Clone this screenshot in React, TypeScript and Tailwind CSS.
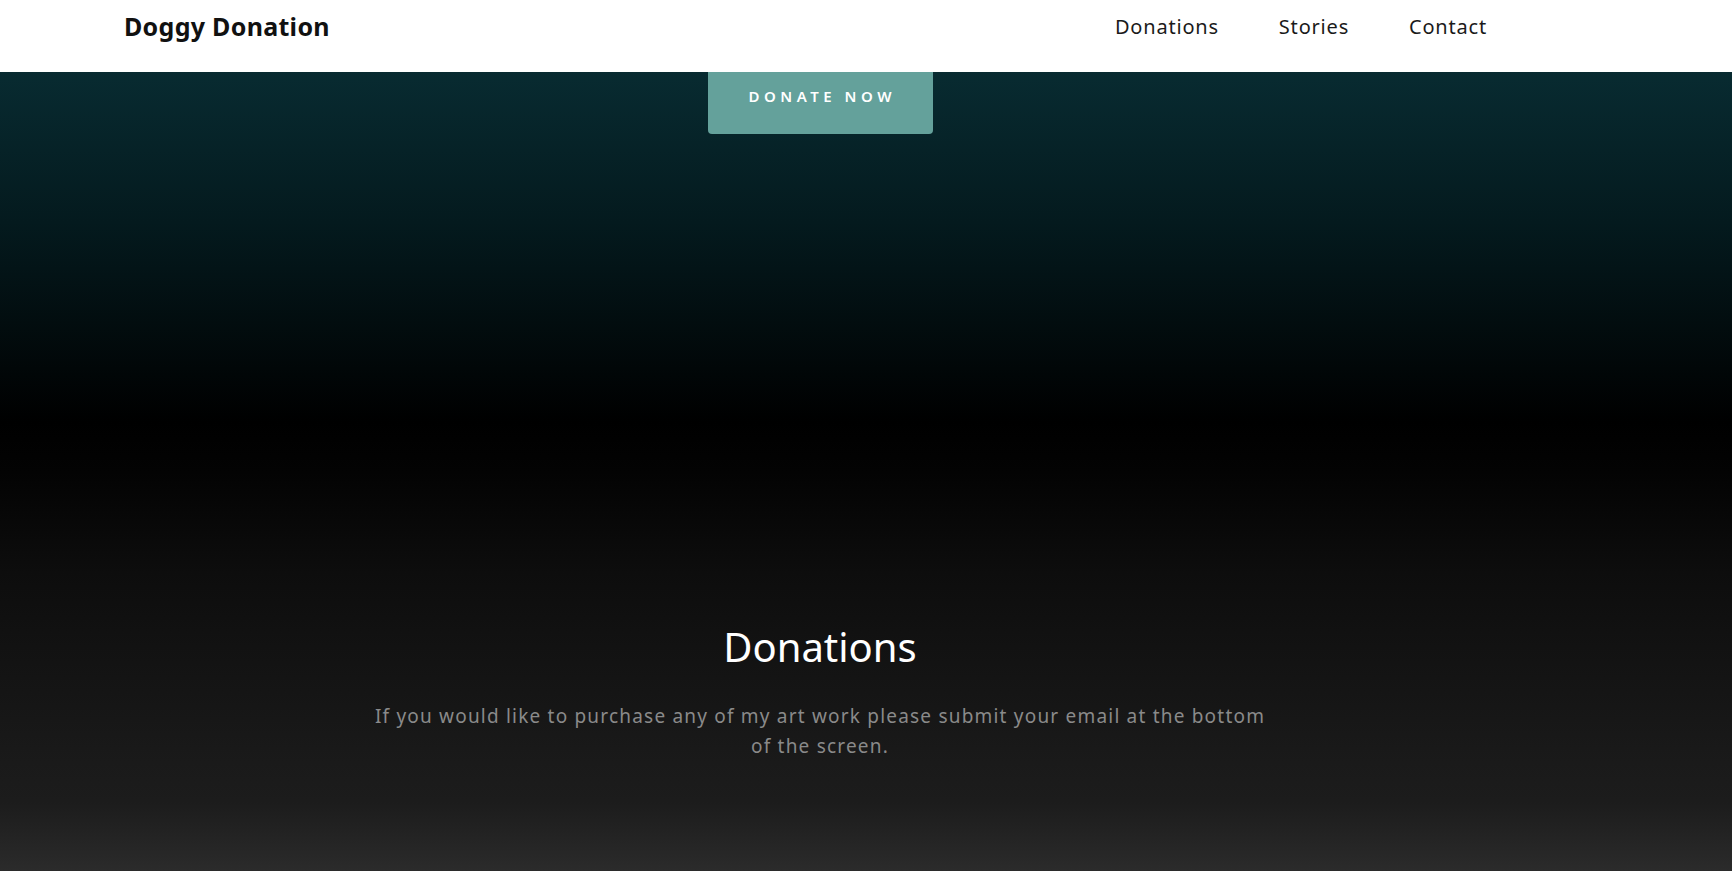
import React from "react";

const font = { fontFamily: '"Noto Sans", "Open Sans", Arial, sans-serif' };

export default function App() {
  return (
    <div className="w-full h-[871px] overflow-hidden" style={font}>
      <header className="h-[72px] bg-white flex items-start">
        <div className="ml-[124px] w-[1363px] flex items-start justify-between">
          <div className="pt-[8px] text-[25px] leading-[36px] font-bold text-[#111] tracking-[0.3px]">
            Doggy Donation
          </div>
          <nav className="pt-[12px] flex gap-[60px] text-[20px] leading-[30px] text-[#1a1a1a] tracking-[0.8px]">
            <a>Donations</a>
            <a>Stories</a>
            <a>Contact</a>
          </nav>
        </div>
      </header>
      <main className="h-[799px] bg-[linear-gradient(to_bottom,#082b31_0px,#041a1e_150px,#000000_350px,#030303_400px,#0d0d0d_500px,#151515_620px,#1a1a1a_690px,#1c1c1c_730px,#2b2b2b_799px)]">
        <div className="w-[1640px] flex flex-col items-center">
          <div className="w-[225px] h-[62px] bg-[#64a19b] rounded-b-[4px] flex justify-center pt-[14px]">
            <span className="text-white text-[15px] leading-[20px] font-semibold tracking-[4.5px] pl-[4.5px]">
              DONATE NOW
            </span>
          </div>
          <h2 className="mt-[489px] text-white text-[40px] leading-[48px] font-normal">
            Donations
          </h2>
          <p className="mt-[30px] w-[915px] text-center text-[19px] leading-[30px] text-[#8a8a8a] tracking-[1.2px]">
            If you would like to purchase any of my art work please submit your email at the bottom of the screen.
          </p>
        </div>
      </main>
    </div>
  );
}
